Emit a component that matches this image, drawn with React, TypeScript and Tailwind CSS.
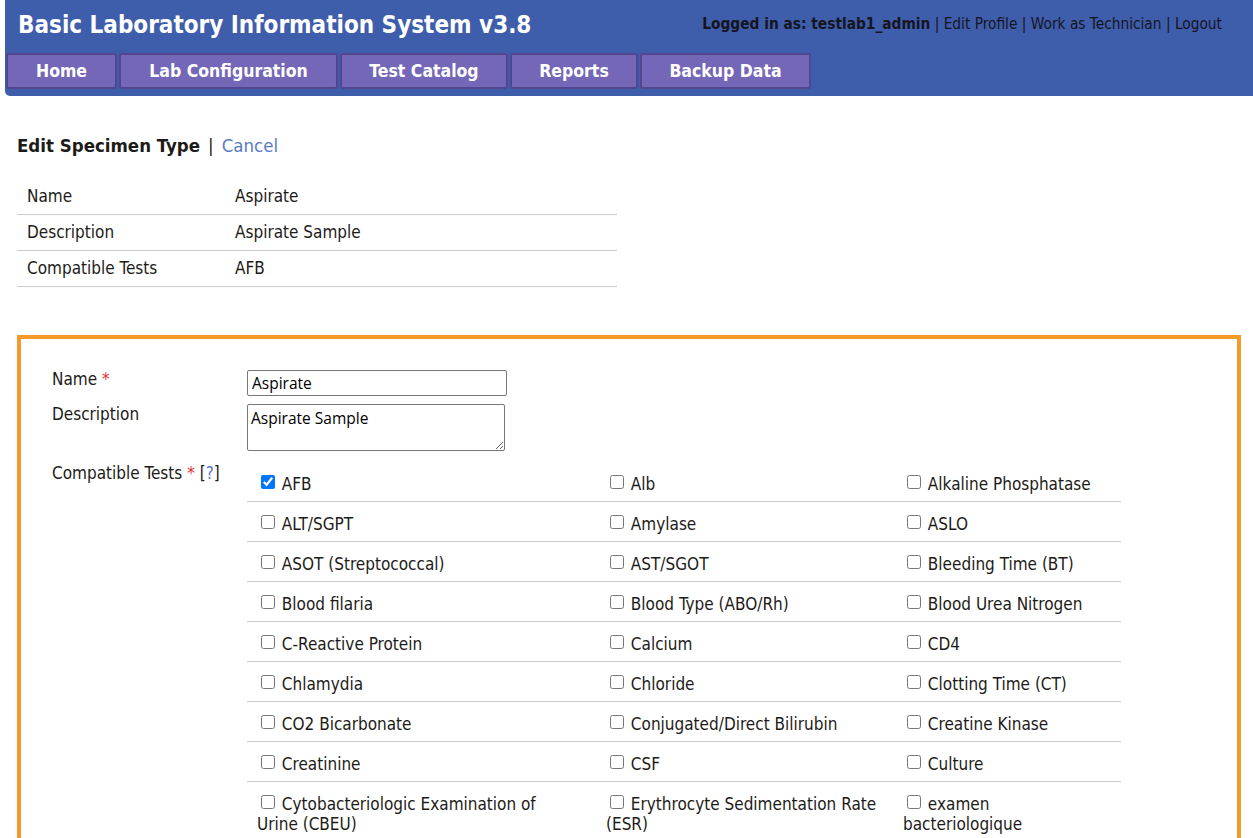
import React from 'react';

// Specimen type editor — header, summary table and edit form with test checkboxes.

const TABS = [
  { label: 'Home', w: 'w-[111px]' },
  { label: 'Lab Configuration', w: 'w-[219px]' },
  { label: 'Test Catalog', w: 'w-[168px]' },
  { label: 'Reports', w: 'w-[128px]' },
  { label: 'Backup Data', w: 'w-[171px]' },
];

const SUMMARY = [
  ['Name', 'Aspirate'],
  ['Description', 'Aspirate Sample'],
  ['Compatible Tests', 'AFB'],
];

const TESTS: string[][] = [
  ['AFB', 'Alb', 'Alkaline Phosphatase'],
  ['ALT/SGPT', 'Amylase', 'ASLO'],
  ['ASOT (Streptococcal)', 'AST/SGOT', 'Bleeding Time (BT)'],
  ['Blood filaria', 'Blood Type (ABO/Rh)', 'Blood Urea Nitrogen'],
  ['C-Reactive Protein', 'Calcium', 'CD4'],
  ['Chlamydia', 'Chloride', 'Clotting Time (CT)'],
  ['CO2 Bicarbonate', 'Conjugated/Direct Bilirubin', 'Creatine Kinase'],
  ['Creatinine', 'CSF', 'Culture'],
  ['Cytobacteriologic Examination of Urine (CBEU)', 'Erythrocyte Sedimentation Rate (ESR)', 'examen bacteriologique'],
];

const COL_W = ['w-[349px] pr-[24px]', 'w-[297px] pr-[10px]', 'w-[228px] pr-[14px]'];

export default function App() {
  return (
    <div className="min-h-[838px] bg-white text-[#1d1b18] font-['DejaVu_Sans_Condensed','DejaVu_Sans',sans-serif]">
      {/* Header */}
      <header className="ml-[5px] h-[96px] bg-[#3e5dab] rounded-bl-[5px]">
        <div className="flex items-center justify-between h-[50px] pl-[13px] pr-[31px]">
          <h1 className="text-[24px] font-bold text-white leading-none">
            Basic Laboratory Information System v3.8
          </h1>
          <div className="text-[15.3px] text-[#15151f] -mt-[2px]">
            <span className="font-bold">Logged in as: testlab1_admin</span>
            <span> | Edit Profile | Work as Technician | Logout</span>
          </div>
        </div>
        <nav className="flex gap-[2px] pl-[1px] mt-[3px]">
          {TABS.map(t => (
            <a
              key={t.label}
              className={`${t.w} h-[36px] flex items-center justify-center pt-[1px] bg-[#7467b7] border-2 border-[#52478f] rounded-[3px] text-white font-bold text-[17.5px]`}
            >
              {t.label}
            </a>
          ))}
        </nav>
      </header>

      <main className="px-[17px]">
        {/* Title */}
        <div className="mt-[37px] h-[26px] flex items-center text-[18.5px]">
          <span className="font-bold">Edit Specimen Type</span>
          <span className="mx-[8px]">|</span>
          <a className="text-[#5a7cc0]">Cancel</a>
        </div>

        {/* Summary */}
        <table className="mt-[19px] w-[600px] border-collapse text-[17px]">
          <tbody>
            {SUMMARY.map(([k, v]) => (
              <tr key={k} className="border-b border-[#cccccc]">
                <td className="w-[218px] pl-[10px] pt-[2px] h-[36px]">{k}</td>
                <td className="pt-[2px]">{v}</td>
              </tr>
            ))}
          </tbody>
        </table>

        {/* Edit form */}
        <section className="mt-[48px] mr-[-5px] border-4 border-[#f39a2b] pt-[30px] pl-[31px] pb-[20px] text-[17px]">
          <div className="flex">
            <label className="w-[195px] leading-[20px]">
              Name <span className="text-[#e0312f]">*</span>
            </label>
            <input
              defaultValue="Aspirate"
              className="mt-[1px] w-[260px] h-[26px] px-[4px] border border-[#767676] rounded-[2px] font-['Open_Sans',sans-serif] text-[15.5px] text-black"
            />
          </div>
          <div className="flex mt-[8px]">
            <label className="w-[195px] leading-[20px]">Description</label>
            <textarea
              defaultValue="Aspirate Sample"
              className="w-[258px] h-[47px] px-[3px] pt-[3px] pb-[1px] border border-[#767676] rounded-[2px] font-['Open_Sans',sans-serif] text-[15.5px] leading-[20px] text-black"
            />
          </div>
          <div className="flex mt-[11px]">
            <label className="w-[195px] leading-[20px] pt-[1px]">
              Compatible Tests <span className="text-[#e0312f]">*</span>{' '}
              [<a className="text-[#5a7cc0]">?</a>]
            </label>
            <table className="border-collapse">
              <tbody>
                {TESTS.map((row, i) => (
                  <tr key={i} className="border-b border-[#cccccc]">
                    {row.map((name, j) => (
                      <td key={name} className={`${COL_W[j]} pl-[10px] pt-[12px] pb-[7px] leading-[20px] align-top`}>
                        <input
                          type="checkbox"
                          defaultChecked={name === 'AFB'}
                          className="ml-[4px] mr-[2px] w-[14px] h-[14px] align-[1px]"
                        />{' '}
                        {name}
                      </td>
                    ))}
                  </tr>
                ))}
              </tbody>
            </table>
          </div>
        </section>
      </main>
    </div>
  );
}
